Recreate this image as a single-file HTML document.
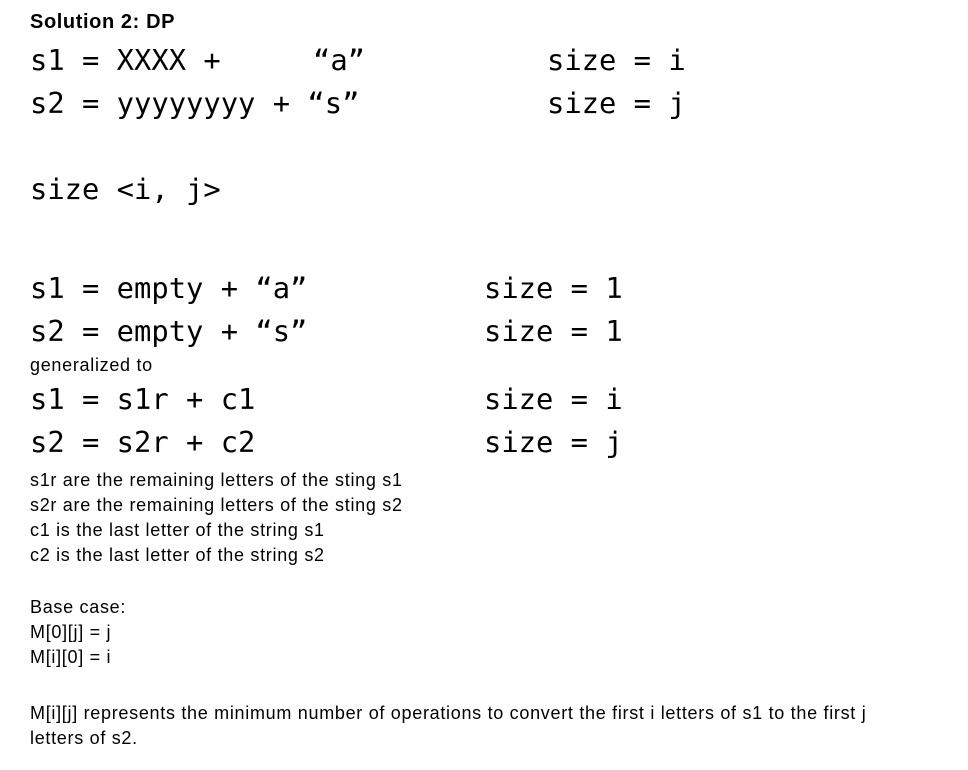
<!DOCTYPE html>
<html><head><style>
body{margin:0;width:968px;height:770px;background:#fff;position:relative;overflow:hidden;color:#000}
.m{position:absolute;font-family:"DejaVu Sans Mono","Liberation Mono",monospace;font-size:28.8px;line-height:34px;white-space:pre}
.t{position:absolute;left:30px;font-family:"Liberation Sans",Arial,sans-serif;font-size:18px;letter-spacing:0.7px;line-height:25px;white-space:pre}
</style></head><body>
<div class="t" style="top:10px;font-weight:bold;font-size:20px;letter-spacing:0.6px">Solution 2: DP</div>
<div class="m" style="left:30px;top:43px">s1 = XXXX +</div>
<div class="m" style="left:313px;top:43px">“a”</div>
<div class="m" style="left:30px;top:86px">s2 = yyyyyyyy + “s”</div>
<div class="m" style="left:547px;top:43px">size = i</div>
<div class="m" style="left:547px;top:86px">size = j</div>
<div class="m" style="left:30px;top:172px">size &lt;i, j&gt;</div>
<div class="m" style="left:30px;top:271px">s1 = empty + “a”</div>
<div class="m" style="left:30px;top:314px">s2 = empty + “s”</div>
<div class="m" style="left:484px;top:271px">size = 1</div>
<div class="m" style="left:484px;top:314px">size = 1</div>
<div class="t" style="top:353px">generalized to</div>
<div class="m" style="left:30px;top:382px">s1 = s1r + c1</div>
<div class="m" style="left:30px;top:425px">s2 = s2r + c2</div>
<div class="m" style="left:484px;top:382px">size = i</div>
<div class="m" style="left:484px;top:425px">size = j</div>
<div class="t" style="top:468px">s1r are the remaining letters of the sting s1
s2r are the remaining letters of the sting s2
c1 is the last letter of the string s1
c2 is the last letter of the string s2</div>
<div class="t" style="top:595px">Base case:
M[0][j] = j
M[i][0] = i</div>
<div class="t" style="top:701px">M[i][j] represents the minimum number of operations to convert the first i letters of s1 to the first j
letters of s2.</div>
</body></html>
